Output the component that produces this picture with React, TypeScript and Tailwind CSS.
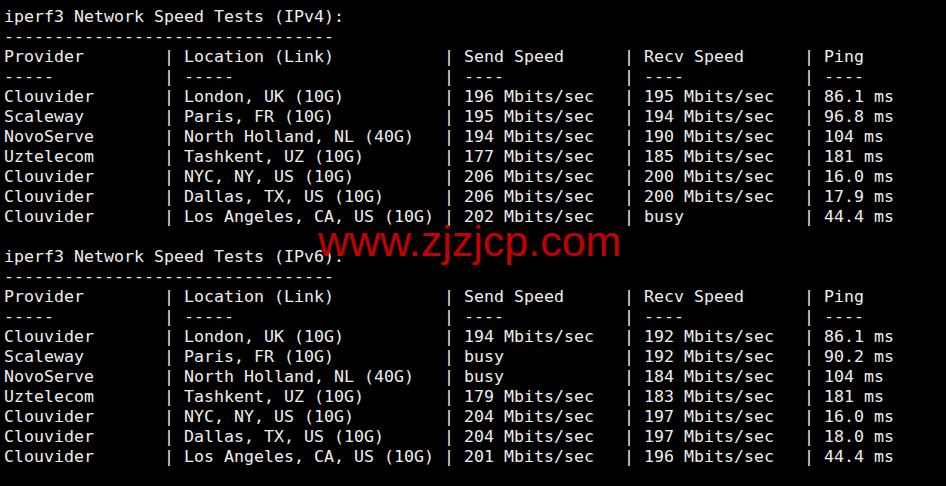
import React from 'react';

type Row = [string, string, string, string, string];

const header: Row = ['Provider', 'Location (Link)', 'Send Speed', 'Recv Speed', 'Ping'];
const divider: Row = ['-----', '-----', '----', '----', '----'];

const ipv4: Row[] = [
  ['Clouvider', 'London, UK (10G)', '196 Mbits/sec', '195 Mbits/sec', '86.1 ms'],
  ['Scaleway', 'Paris, FR (10G)', '195 Mbits/sec', '194 Mbits/sec', '96.8 ms'],
  ['NovoServe', 'North Holland, NL (40G)', '194 Mbits/sec', '190 Mbits/sec', '104 ms'],
  ['Uztelecom', 'Tashkent, UZ (10G)', '177 Mbits/sec', '185 Mbits/sec', '181 ms'],
  ['Clouvider', 'NYC, NY, US (10G)', '206 Mbits/sec', '200 Mbits/sec', '16.0 ms'],
  ['Clouvider', 'Dallas, TX, US (10G)', '206 Mbits/sec', '200 Mbits/sec', '17.9 ms'],
  ['Clouvider', 'Los Angeles, CA, US (10G)', '202 Mbits/sec', 'busy', '44.4 ms'],
];

const ipv6: Row[] = [
  ['Clouvider', 'London, UK (10G)', '194 Mbits/sec', '192 Mbits/sec', '86.1 ms'],
  ['Scaleway', 'Paris, FR (10G)', 'busy', '192 Mbits/sec', '90.2 ms'],
  ['NovoServe', 'North Holland, NL (40G)', 'busy', '184 Mbits/sec', '104 ms'],
  ['Uztelecom', 'Tashkent, UZ (10G)', '179 Mbits/sec', '183 Mbits/sec', '181 ms'],
  ['Clouvider', 'NYC, NY, US (10G)', '204 Mbits/sec', '197 Mbits/sec', '16.0 ms'],
  ['Clouvider', 'Dallas, TX, US (10G)', '204 Mbits/sec', '197 Mbits/sec', '18.0 ms'],
  ['Clouvider', 'Los Angeles, CA, US (10G)', '201 Mbits/sec', '196 Mbits/sec', '44.4 ms'],
];

const widths = [16, 26, 16, 16];

const fmt = (r: Row) =>
  r[0].padEnd(widths[0]) +
  '| ' + r[1].padEnd(widths[1]) +
  '| ' + r[2].padEnd(widths[2]) +
  '| ' + r[3].padEnd(widths[3]) +
  '| ' + r[4];

const section = (v: string) => [
  `iperf3 Network Speed Tests (${v}):`,
  '-'.repeat(33),
  fmt(header),
  fmt(divider),
];

const lines: string[] = [
  ...section('IPv4'),
  ...ipv4.map(fmt),
  '',
  ...section('IPv6'),
  ...ipv6.map(fmt),
];

export default function App() {
  return (
    <div className="relative w-[946px] h-[486px] bg-black overflow-hidden pl-[4px] pt-[7px]">
      <div className="text-[#ededed] text-[16.61px] whitespace-pre" style={{ fontFamily: '"DejaVu Sans Mono", monospace' }}>
        {lines.map((l, i) => (
          <div key={i} className="h-[20px] leading-[20px]">
            {l || ' '}
          </div>
        ))}
      </div>
      {/* watermark */}
      <div
        className="absolute left-[318px] top-[220px] text-[43px] leading-[43px] text-[#c40000] whitespace-nowrap"
        style={{ fontFamily: '"Liberation Sans", Arial, sans-serif' }}
      >
        www.zjzjcp.com
      </div>
    </div>
  );
}
